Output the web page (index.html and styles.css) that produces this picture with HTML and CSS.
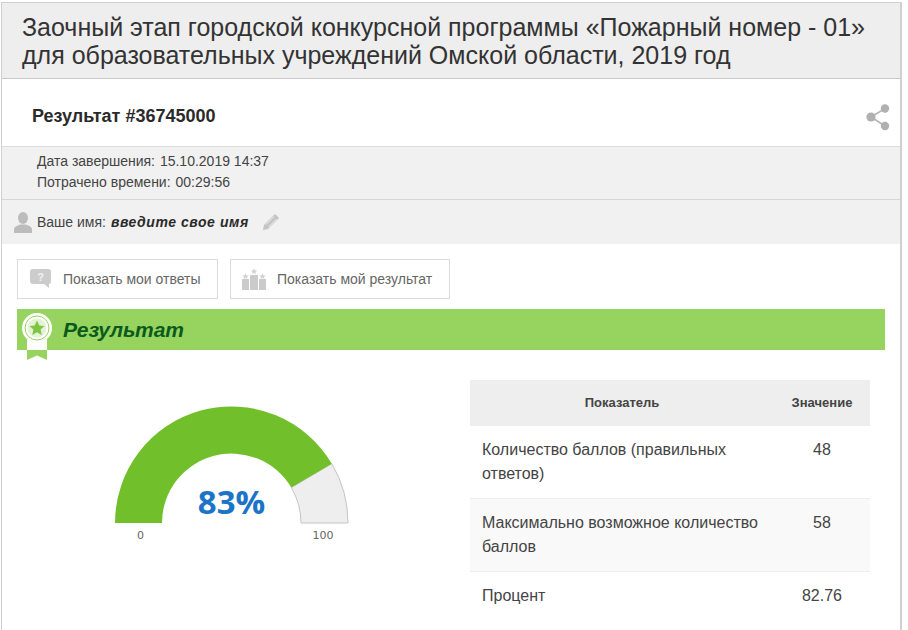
FILE: index.html
```html
<!DOCTYPE html>
<html lang="ru">
<head>
    <meta charset="UTF-8">
    <title>Результат</title>
    <link rel="stylesheet" href="styles.css">
</head>
<body>
    <div class="page">
        <h1 class="title">Заочный этап городской конкурсной программы «Пожарный номер - 01» для образовательных учреждений Омской области, 2019 год</h1>

        <div class="result-head">
            <h2>Результат #36745000</h2>
            <svg class="share" width="24" height="28" viewBox="0 0 24 28">
                <path d="M19 5.500L5 14L19 23" fill="none" stroke="#b4b4b4" stroke-width="1.600"/>
                <circle cx="19" cy="5.500" r="4.200" fill="#b0b0b0"/>
                <circle cx="5" cy="14" r="4.600" fill="#b0b0b0"/>
                <circle cx="19" cy="23" r="4.200" fill="#b0b0b0"/>
            </svg>
        </div>

        <div class="meta">
            <p>Дата завершения: <span>15.10.2019 14:37</span></p>
            <p>Потрачено времени: <span>00:29:56</span></p>
        </div>

        <div class="name-row">
            <svg width="18" height="21" viewBox="0 0 18 21">
                <ellipse cx="9" cy="6" rx="5" ry="6" fill="#bcbcbc"/>
                <path d="M0 21V17.500C0 14.500 4 13.500 6 12.500H12C14 13.500 18 14.500 18 17.500V21Z" fill="#bcbcbc"/>
            </svg>
            <span>Ваше имя:</span>
            <b>введите свое имя</b>
            <svg class="pencil" width="18" height="18" viewBox="0 0 18 18">
                <path d="M13 1L17 5L6 16L1 17L2 12Z" fill="#c4c4c4"/>
                <path d="M4 11.500L12 3.500M6.500 14L14.500 6" stroke="#f0f0f0" stroke-width="1"/>
            </svg>
        </div>

        <div class="buttons">
            <a class="btn btn-answers">
                <svg width="23" height="20" viewBox="0 0 23 20">
                    <path d="M4 0H19Q22 0 22 3V13Q22 15 20 15V19L15 15H4Q1 15 1 12V3Q1 0 4 0Z" fill="#cccccc"/>
                    <text class="btn-mark" x="11.500" y="12" text-anchor="middle">?</text>
                </svg>
                Показать мои ответы
            </a>
            <a class="btn btn-rating">
                <svg width="24" height="22" viewBox="0 0 24 22">
                    <path d="M0 11H7V22H0ZM8 7H16V22H8ZM17 11H24V22H17Z" fill="#cbcbcb"/>
                    <path d="M3.500 5L4.500 7.500H7L5 9L5.500 11L3.500 10L1.500 11L2 9L0 7.500H2.500ZM12 0L13 2.500H15.500L13.500 4L14 6L12 5L10 6L10.500 4L8.500 2.500H11ZM20.500 5L21.500 7.500H24L22 9L22.500 11L20.500 10L18.500 11L19 9L17 7.500H19.500Z" fill="#d2d2d2"/>
                </svg>
                Показать мой результат
            </a>
        </div>

        <div class="section-bar">
            <svg class="medal" width="32" height="48" viewBox="0 0 32 48">
                <path d="M6 26H26V37H6Z" fill="#fff"/>
                <path d="M6 37H26V47L16 42.500L6 47Z" fill="#97d45f"/>
                <circle cx="16" cy="15" r="15" fill="#fff"/>
                <circle cx="16" cy="15" r="12" fill="none" stroke="#97d45f" stroke-width="1"/>
                <circle cx="16" cy="15" r="9.500" fill="#e4f3d6"/>
                <path d="M16 7.500L18.300 12.500L23.500 13L19.600 16.600L20.700 22L16 19.200L11.300 22L12.400 16.600L8.500 13L13.700 12.500Z" fill="#7fc444"/>
            </svg>
            <span>Результат</span>
        </div>

        <div class="result-body">
            <div class="gauge">
                <svg width="453" height="180" viewBox="0 0 453 180">
                    <!-- centre of the arc is 214.5,143 -->
                    <path d="M314.800 83.700A116.500 116.500 0 0 1 331 143H284A69.500 69.500 0 0 0 274.300 107.600Z" fill="#eeeeee" stroke="#c4c4c4" stroke-width="1"/>
                    <path d="M98 143A116.500 116.500 0 0 1 314.800 83.700L274.300 107.600A69.500 69.500 0 0 0 145 143Z" fill="#70bf2b"/>
                    <text class="gauge-value" x="214.500" y="134" text-anchor="middle">83%</text>
                    <text class="gauge-label" x="123.500" y="159" text-anchor="middle">0</text>
                    <text class="gauge-label" x="306" y="159" text-anchor="middle">100</text>
                </svg>
            </div>

            <table class="stats">
                <thead>
                    <tr><th>Показатель</th><th class="val">Значение</th></tr>
                </thead>
                <tbody>
                    <tr><td>Количество баллов (правильных ответов)</td><td class="val">48</td></tr>
                    <tr class="odd"><td>Максимально возможное количество баллов</td><td class="val">58</td></tr>
                    <tr><td>Процент</td><td class="val">82.76</td></tr>
                </tbody>
            </table>
        </div>
    </div>
</body>
</html>
```

FILE: styles.css
```css
html, body {
    height: 100%;
}

body {
    margin: 0;
    padding: 2px 0 0 1px;
    box-sizing: border-box;
    overflow: hidden;
    background-color: #fff;
    font-family: "Liberation Sans", Arial, sans-serif;
    color: #333;
}

.page {
    box-sizing: border-box;
    width: 901px;
    min-height: 640px;
    border: 1px solid #d0d0d0;
    border-right: 2px solid #d0d0d0;
}

.title {
    margin: 0;
    padding: 10px 30px 9px 20px;
    background-color: #eeeeee;
    border-bottom: 1px solid #c8c8c8;
    font-size: 25px;
    font-weight: normal;
    line-height: 28px;
    color: #333;
}

.result-head {
    display: flex;
    align-items: center;
    justify-content: space-between;
    box-sizing: border-box;
    height: 68px;
    padding: 8px 10px 0 30px;
    border-bottom: 1px solid #dcdcdc;
}

.result-head h2 {
    margin: 0;
    font-size: 18px;
    color: #2a2a2a;
}

.meta {
    padding: 4px 35px 6px;
    background-color: #f1f1f1;
    border-bottom: 1px solid #d6d6d6;
    font-size: 14px;
    line-height: 21px;
    color: #444;
}

.meta p {
    margin: 0;
}

.meta span {
    margin-left: 1px;
}

.name-row {
    display: flex;
    align-items: center;
    height: 44px;
    padding-left: 12px;
    background-color: #f1f1f1;
    font-size: 14px;
    color: #444;
}

.name-row span {
    margin: 0 5px 0 5px;
}

.name-row b {
    font-style: italic;
    letter-spacing: .55px;
    color: #2a2a2a;
}

.pencil {
    margin-left: 13px;
}

.buttons {
    display: flex;
    gap: 12px;
    padding: 15px 15px 10px;
}

.btn {
    display: flex;
    align-items: center;
    box-sizing: border-box;
    height: 40px;
    border: 1px solid #dcdcdc;
    font-size: 14px;
    color: #666;
}

.btn-answers {
    width: 201px;
    padding-left: 11px;
    gap: 11px;
}

.btn-rating {
    width: 220px;
    padding-left: 11px;
    gap: 11px;
}

.btn-mark {
    font-size: 11px;
    font-weight: bold;
    fill: #f2f2f2;
}

.section-bar {
    position: relative;
    display: flex;
    align-items: center;
    height: 41px;
    margin: 0 15px;
    padding-left: 46px;
    width: 822px;
    background-color: #97d45f;
    font-size: 21px;
    font-weight: bold;
    font-style: italic;
    color: #0b5a1c;
}

.medal {
    position: absolute;
    left: 4px;
    top: 4px;
}

.result-body {
    display: flex;
    padding: 30px 0 0 15px;
}

.gauge {
    width: 453px;
}

.gauge svg {
    display: block;
}

.gauge-value {
    font-family: "Open Sans", sans-serif;
    font-size: 33px;
    font-weight: bold;
    fill: #1b74c8;
}

.gauge-label {
    font-family: "DejaVu Sans", sans-serif;
    font-size: 11px;
    fill: #666;
}

.stats {
    width: 400px;
    height: 0;
    border-collapse: collapse;
    font-size: 16px;
    line-height: 24px;
    color: #444;
}

.stats th {
    height: 46px;
    padding: 0 12px;
    background-color: #eeeeee;
    font-size: 13px;
    line-height: 16px;
    color: #444;
}

.stats td {
    padding: 12px;
    border-bottom: 1px solid #eeeeee;
    vertical-align: top;
}

.stats tr:last-child td {
    border-bottom: none;
}

.stats .odd td {
    background-color: #f9f9f9;
}

.stats .val {
    width: 72px;
    text-align: center;
    white-space: nowrap;
}
```
